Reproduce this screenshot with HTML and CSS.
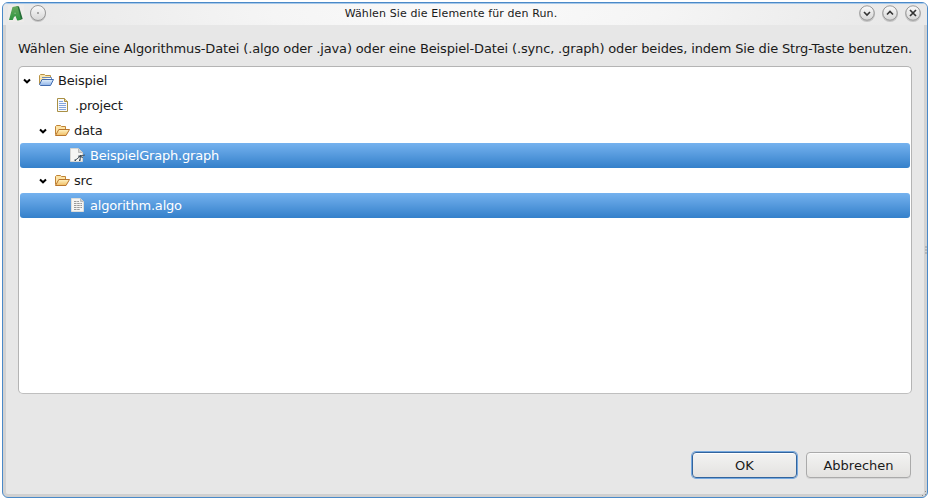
FILE: index.html
```html
<!DOCTYPE html>
<html lang="de">
<head>
<meta charset="utf-8">
<title>Wählen Sie die Elemente für den Run.</title>
<link rel="stylesheet" href="styles.css">
</head>
<body>
<svg class="defs" width="0" height="0" aria-hidden="true">
  <defs>
    <linearGradient id="gold" x1="0" y1="0" x2="0" y2="1"><stop offset="0" stop-color="#fff3c4"/><stop offset="1" stop-color="#f0bd62"/></linearGradient>
    <linearGradient id="blue" x1="0" y1="0" x2="0" y2="1"><stop offset="0" stop-color="#e2f0fb"/><stop offset="1" stop-color="#8eb2e8"/></linearGradient>
    <linearGradient id="green" x1="0" y1="0" x2="0" y2="1"><stop offset="0" stop-color="#6aa95f"/><stop offset="1" stop-color="#2c9440"/></linearGradient>
    <linearGradient id="metal" x1="0" y1="0" x2="0" y2="1"><stop offset="0" stop-color="#fafafa"/><stop offset="1" stop-color="#d6d6d6"/></linearGradient>
    <symbol id="folder" viewBox="0 0 16 16">
      <path d="M1.5 11.5V3.5L2.5 2.5H6.5L7.5 3.5H11.5V6.5" fill="#fde3a5" stroke="#c18436"/>
      <path d="M1.5 12.5L4.8 6.5H15.5L12 12.5Z" fill="url(#gold)" stroke="#b9762e"/>
    </symbol>
    <symbol id="arrow" viewBox="0 0 8 8"><path d="M1 2.5L4 5.3L7 2.5" fill="none" stroke="#000" stroke-width="2"/></symbol>
  </defs>
</svg>
<div class="window">
  <header class="titlebar">
    <svg class="logo" width="16" height="17" viewBox="0 0 16 17"><path d="M0 0H16V17H0Z" fill="#eeecea"/><path d="M9 1L11 1.5L14.7 14L10.5 15.5L7 3Z" fill="#256d38"/><path d="M1 15L4.5 2L9.5 1L13 14.5L9.2 15.5L7.5 11L6 12L4.8 15Z" fill="url(#green)"/><path d="M6.6 9L7 7L7.5 9Z" fill="#b9d2b8"/></svg>
    <svg class="round menu" width="18" height="19" viewBox="0 0 18 19"><circle cx="9" cy="10" r="8" fill="#c4c4c4"/><circle cx="9" cy="9" r="7.5" fill="url(#metal)" stroke="#999"/><circle cx="9" cy="9" r=".8" fill="#555"/></svg>
    <h1 class="title">Wählen Sie die Elemente für den Run.</h1>
    <div class="controls">
      <svg class="round" width="18" height="19" viewBox="0 0 18 19"><circle cx="9" cy="10" r="8" fill="#c4c4c4"/><circle cx="9" cy="9" r="7.2" fill="url(#metal)" stroke="#999"/><path d="M6 8L9 11L12 8" fill="none" stroke="#333" stroke-width="1.6"/></svg>
      <svg class="round" width="18" height="19" viewBox="0 0 18 19"><circle cx="9" cy="10" r="8" fill="#c4c4c4"/><circle cx="9" cy="9" r="7.2" fill="url(#metal)" stroke="#999"/><path d="M6 10.5L9 7.5L12 10.5" fill="none" stroke="#333" stroke-width="1.6"/></svg>
      <svg class="round" width="18" height="19" viewBox="0 0 18 19"><circle cx="9" cy="10" r="8" fill="#c4c4c4"/><circle cx="9" cy="9" r="7.2" fill="url(#metal)" stroke="#999"/><path d="M6 6L12 12M12 6L6 12" fill="none" stroke="#333" stroke-width="1.7"/></svg>
    </div>
  </header>
  <main class="content">
    <p class="message">Wählen Sie eine Algorithmus-Datei (.algo oder .java) oder eine Beispiel-Datei (.sync, .graph) oder beides, indem Sie die Strg-Taste benutzen.</p>
    <div class="tree">
      <div class="row project">
        <svg class="arrow" width="8" height="8"><use href="#arrow"/></svg>
        <svg class="icon" width="16" height="16" viewBox="0 0 16 16"><path d="M1.5 11.5V2.5L2.5 1.5H6.5L7.5 2.5H12.5V6.5" fill="#fbe6ae" stroke="#b99446"/><path d="M4 4.5H13.5V7" fill="#fff" stroke="#6a89bb"/><path d="M1.5 11.5L4 6.5H15.5L12.5 12.5H2.5Z" fill="url(#blue)" stroke="#426cb0"/></svg>
        <span>Beispiel</span>
      </div>
      <div class="row file">
        <svg class="icon" width="16" height="16" viewBox="0 0 16 16"><path d="M2.5 .5H9.5L12.5 3.5V13.5H2.5Z" fill="#f8fafd" stroke="#a99045"/><path d="M9.5 .5V3.5H12.5" fill="#e9d9a0" stroke="#a99045"/><path d="M4 3.5H8M4 5.5H11M4 7.5H11M4 9.5H11M4 11.5H11" stroke="#84a5dc"/></svg>
        <span>.project</span>
      </div>
      <div class="row folder">
        <svg class="arrow" width="8" height="8"><use href="#arrow"/></svg>
        <svg class="icon" width="16" height="16"><use href="#folder"/></svg>
        <span>data</span>
      </div>
      <div class="row leaf selected">
        <svg class="icon" width="16" height="16" viewBox="0 0 16 16"><path d="M.5 .5H8.5L12.5 4.5V13.5H.5Z" fill="#f5f5f3" stroke="#d5d5d2"/><path d="M8.5 .5V4.5H12.5" fill="#d3d3d1" stroke="#bcbcba"/><path d="M5 12.5L10.5 8L10 12M8 8L13 9.5M10.5 8L15 7" fill="none" stroke="#4b5760"/><path d="M4.5 11.5H6V13H4.5ZM9.5 7H11.5V9H9.5ZM9 11.5H10.5V13H9Z" fill="#3e4b54"/></svg>
        <span>BeispielGraph.graph</span>
      </div>
      <div class="row folder">
        <svg class="arrow" width="8" height="8"><use href="#arrow"/></svg>
        <svg class="icon" width="16" height="16"><use href="#folder"/></svg>
        <span>src</span>
      </div>
      <div class="row leaf selected">
        <svg class="icon" width="16" height="16" viewBox="0 0 16 16"><path d="M1.5 .5H10.5L13.5 3.5V13.5H1.5Z" fill="#f5f5f3" stroke="#ddddda"/><path d="M10.5 .5V3.5H13.5" fill="#ccc" stroke="#bbb"/><path d="M4 3.5H9M4 5.5H12M4 7.5H12M4 9.5H12M4 11.5H10" stroke="#999" stroke-dasharray="2.5 .7"/></svg>
        <span>algorithm.algo</span>
      </div>
    </div>
    <div class="actions">
      <button class="button default">OK</button>
      <button class="button">Abbrechen</button>
    </div>
  </main>
  <svg class="grip" width="3" height="9" viewBox="0 0 3 9"><path d="M1 1h2M1 4h2M1 7h2" stroke="#999"/></svg>
  <svg class="grip corner" width="6" height="6" viewBox="0 0 6 6"><path d="M4 0h1v1h-1zM4 3h1v1h-1zM1 4h1v1h-1z" fill="#888"/></svg>
</div>
</body>
</html>
```
FILE: styles.css
```css
* { box-sizing: border-box; }
body {
  margin: 0;
  padding: 2px 5px 3px 2px;
  background: #fff;
  color: #1a1a1a;
  font: 13px/25px "DejaVu Sans", sans-serif;
}
.defs { position: absolute; }
.window {
  position: relative;
  height: 496px;
  overflow: hidden;
  border: 1px solid #4a89c8;
  border-radius: 6px;
  background: #e7e7e7;
  box-shadow: inset 0 1px #a7c8e8, inset 3px 0 #d2d2d2, inset -3px 0 #d2d2d2, inset 0 -3px #d0d0d0;
}
.titlebar {
  display: flex;
  align-items: flex-start;
  height: 22px;
  padding: 2px 5px 0 5px;
  background: radial-gradient(ellipse 430px 50px at 50% 50%, #fafafa 0, #f5f5f5 45%, #e9e9e9 100%);
  box-shadow: inset 0 1px #a7c8e8;
}
.logo { margin-right: 5px; }
.round { display: block; flex: none; margin-top: -1px; }
.logo, .menu { flex: none; }
.title {
  flex: 1;
  margin: 0;
  padding-right: 3px;
  font-size: 11px;
  font-weight: normal;
  letter-spacing: .12px;
  line-height: 17px;
  text-align: center;
}
.controls { display: flex; gap: 5px; }
.content { padding: 11px 15px 0; }
.message { height: 25px; margin: 0 0 5px; white-space: nowrap; letter-spacing: -.15px; }
.tree {
  height: 328px;
  padding: 1px;
  border: 1px solid #b4b4b4;
  border-bottom-color: #bfbfbf;
  border-radius: 5px;
  background: #fff;
  letter-spacing: -.2px;
}
.row {
  display: flex;
  align-items: center;
  height: 25px;
  border-radius: 3px;
}
.arrow { margin-right: 7px; }
.icon { margin-right: 4px; }
.arrow, .icon { flex: none; }
.project { padding-left: 3px; }
.file { padding-left: 35px; }
.folder { padding-left: 19px; }
.leaf { padding-left: 50px; }
.selected { background: linear-gradient(#75b2ef, #3480ca); color: #fff; }
.actions {
  display: flex;
  justify-content: flex-end;
  gap: 9px;
  margin-top: 58px;
  padding-right: 1px;
}
.button {
  width: 105px;
  height: 26px;
  padding: 2px 0 0;
  border: 1px solid #aaa;
  border-radius: 4px;
  background: linear-gradient(#f3f3f2, #e3e2e0);
  color: #1a1a1a;
  font: inherit;
  line-height: 22px;
  box-shadow: inset 0 1px #fafafa, 0 1px #d5d5d5;
}
.default { border-color: #32649d; box-shadow: 0 0 0 1px #76a9df, inset 0 1px #fff; }
.grip { position: absolute; right: 0; top: 243px; }
.corner { top: auto; bottom: 0; }
```
